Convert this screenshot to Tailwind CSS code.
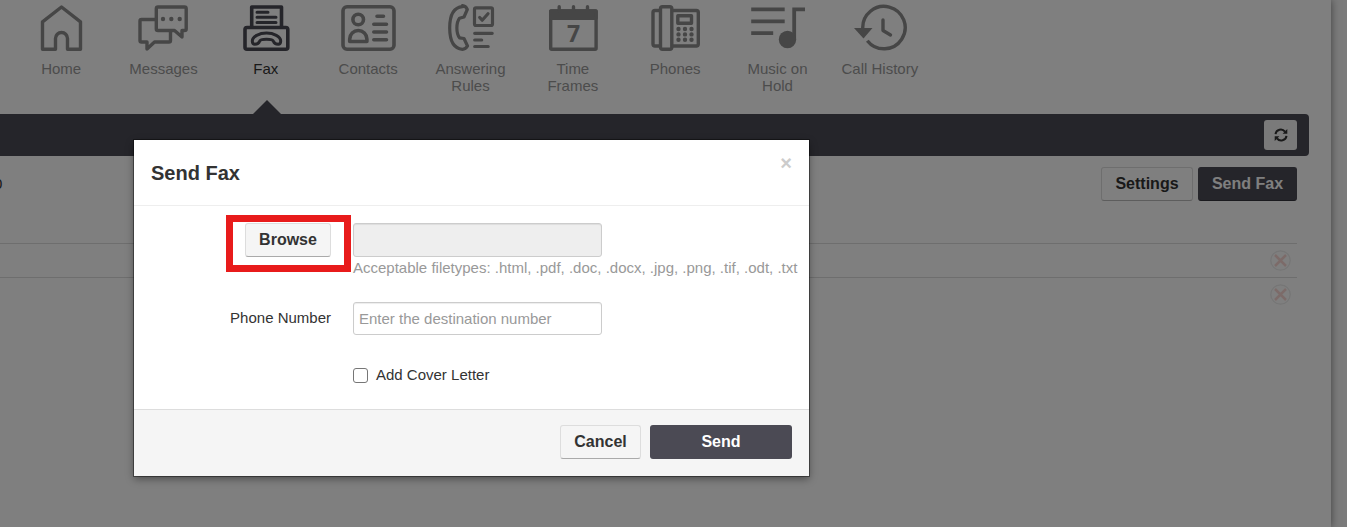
<!DOCTYPE html>
<html lang="en">
<head>
    <meta charset="utf-8">
    <title>Send Fax</title>
    <script src="https://cdn.jsdelivr.net/npm/@tailwindcss/browser@4"></script>
</head>
<body class="relative min-h-screen overflow-hidden bg-[#f6f6f6] font-['Liberation_Sans',Arial,sans-serif] text-[15px] text-[#333]">
<!-- Page behind the dialog -->
<div class="mr-4 min-h-screen bg-white shadow-[0_0_8px_rgba(0,0,0,0.5)]">
    <!-- Main navigation -->
    <nav class="ml-[10px] grid h-[114px] w-[921px] grid-cols-9 pt-1 text-center leading-[17px] text-[#999]">
        <a href="#" class="flex flex-col items-center gap-2">
            <svg class="h-12 w-14" viewBox="33 4 56 48" fill="none" stroke="#8c8c8c" stroke-width="3.4" stroke-linejoin="round">
                <path d="M42.5 49.3V21.8L61.5 7l19 14.8v27.5H67.5V38.5a6 6 0 0 0-12 0v10.8z"/>
            </svg>
            <span>Home</span>
        </a>
        <a href="#" class="flex flex-col items-center gap-2">
            <svg class="h-12 w-14" viewBox="136 4 56 48" fill="none" stroke="#8c8c8c" stroke-width="3.4" stroke-linejoin="round">
                <path d="M159 7h26.5q1.7 0 1.7 1.7V29q0 1.5-1.7 1.5H183V37l-7.5-6.500H159q-1.700 0-1.700-1.500V8.700Q157.300 7 159 7z"/>
                <path d="M157 19.500h-14.500q-1.500 0-1.500 1.500v19.500q0 1.500 1.500 1.500h5.500v7l7.500-7h14.500q1.500 0 1.500-1.500V31"/>
                <g fill="#8c8c8c" stroke="none">
                    <circle cx="164" cy="19" r="2.200"/>
                    <circle cx="172.300" cy="19" r="2.200"/>
                    <circle cx="180.700" cy="19" r="2.200"/>
                </g>
            </svg>
            <span>Messages</span>
        </a>
        <a href="#" class="relative flex flex-col items-center gap-2 text-[#333]">
            <svg class="h-12 w-14" viewBox="238 4 56 48" fill="none" stroke="#4b4a54" stroke-width="3.600" stroke-linejoin="round" stroke-linecap="round">
                <path d="M251.700 27V7h29.800v20"/>
                <rect x="245" y="27.500" width="42.800" height="21.800" rx="2"/>
                <path stroke-width="3" d="M257 12.200h11M257 17.200h19M257 22.500h19"/>
                <path stroke-width="3" d="M252.300 41c0-4.500 7-8 14.200-8s14.200 3.500 14.200 8c0 2-1 3.200-2.500 3.200-2 0-4.200-1.200-4.800-3-.500-1.500-1.500-2-6.900-2s-6.400.500-6.900 2c-.600 1.800-2.800 3-4.800 3-1.500 0-2.500-1.200-2.500-3.200z"/>
            </svg>
            <span>Fax</span>
            <svg class="absolute top-24 h-[14px] w-[30px]" viewBox="0 0 30 14" fill="#4b4a54"><path d="M16 0l14 14H2z"/></svg>
        </a>
        <a href="#" class="flex flex-col items-center gap-2">
            <svg class="h-12 w-14" viewBox="340 4 56 48" fill="none" stroke="#8c8c8c" stroke-width="3.600" stroke-linecap="round" stroke-linejoin="round">
                <rect x="343" y="6.800" width="51" height="42.400" rx="4"/>
                <circle cx="358.200" cy="19.500" r="5.300"/>
                <path d="M349.700 41.500v-2.500a8.600 8.500 0 0 1 17.200 0v2.500z"/>
                <path d="M377 16.300h6.500M373.800 24.200h12.700M373.800 32h12.700M373.800 39.700h12.700"/>
            </svg>
            <span>Contacts</span>
        </a>
        <a href="#" class="flex flex-col items-center gap-2">
            <svg class="h-12 w-14" viewBox="442 4 56 48" fill="none" stroke="#8c8c8c" stroke-width="3.200" stroke-linecap="round" stroke-linejoin="round">
                <path d="M462.500 6.700C453 7.500 449.700 17 449.700 28s3.300 20.500 12.800 21.300c2.500 0 4-1.500 5-3.300l-3.500-7.500-4.500-.700c-3.500-4.500-3.500-15 0-19.500l4.500-1.300 3.300-7.500c-.800-1.800-2.300-3.600-4.800-3.800z"/>
                <rect x="474.500" y="7.800" width="18" height="17.700" rx="1.500"/>
                <path d="M479.700 17.500l2.500 2.700 5.800-6.500"/>
                <path d="M474.700 33.300h17.500M474.700 40h7M474.700 46.500h13.500"/>
            </svg>
            <span>Answering<br>Rules</span>
        </a>
        <a href="#" class="flex flex-col items-center gap-2">
            <svg class="h-12 w-14" viewBox="545 4 56 48" fill="none" stroke="#8c8c8c" stroke-width="3.400" stroke-linecap="round" stroke-linejoin="round">
                <rect x="550.700" y="11" width="45.400" height="38.300" rx="1"/>
                <path fill="#8c8c8c" d="M550.700 11h45.400v7.300h-45.400z"/>
                <path d="M559.200 6.700v4M573.500 6.700v4M587.500 6.700v4"/>
                <text x="573.500" y="42" text-anchor="middle" class="font-['Open_Sans',sans-serif] text-[23px] font-bold" fill="#8c8c8c" stroke="none">7</text>
            </svg>
            <span>Time<br>Frames</span>
        </a>
        <a href="#" class="flex flex-col items-center gap-2">
            <svg class="h-12 w-14" viewBox="647 4 56 48" fill="none" stroke="#8c8c8c" stroke-width="3.400" stroke-linejoin="round">
                <path d="M660.500 10.500h-5.500q-2 0-2 2v31.500q0 2 2 2h5.500"/>
                <rect x="660.500" y="6.700" width="11.300" height="42.600" rx="2"/>
                <path d="M671.800 10.500h24.500q2 0 2 2v31.500q0 2-2 2h-24.500"/>
                <rect x="677.800" y="15.700" width="13.700" height="7.500"/>
                <path stroke-width="4.400" stroke-linecap="round" stroke-dasharray="0 6.500" d="M678.500 29h13.100M678.500 34.400h13.100M678.500 39.700h13.100"/>
            </svg>
            <span>Phones</span>
        </a>
        <a href="#" class="flex flex-col items-center gap-2">
            <svg class="h-12 w-14" viewBox="750 4 56 48" fill="none" stroke="#8c8c8c" stroke-width="3.800">
                <path d="M752.200 9.300h33.500M752.200 21.300h33.500M752.200 33.200h22M795.200 39V9.300h11"/>
                <circle cx="788.500" cy="39.500" r="8.700" fill="#8c8c8c" stroke="none"/>
            </svg>
            <span>Music on<br>Hold</span>
        </a>
        <a href="#" class="flex flex-col items-center gap-2">
            <svg class="h-12 w-14" viewBox="852 4 56 48" fill="none" stroke="#8c8c8c" stroke-width="3.400">
                <path d="M862.800 29A21.200 21.200 0 1 1 867.300 40.700"/>
                <path fill="#8c8c8c" stroke="none" d="M854 28h18.500l-9 10.500z"/>
                <path stroke-linecap="round" stroke-linejoin="round" d="M883 20v10.500l7.500 4.500"/>
            </svg>
            <span>Call History</span>
        </a>
    </nav>

    <!-- Toolbar -->
    <div class="mr-[22px] flex h-[42px] items-center justify-end rounded-r bg-[#4b4a54] pr-3">
        <button type="button" aria-label="Refresh" class="flex h-[30px] w-[33px] items-center justify-center rounded-[3px] bg-[#f5f5f5]">
            <svg class="size-[14px]" viewBox="0 0 14 14" fill="none" stroke="#333" stroke-width="2">
                <path d="M1.500 6.200a5.300 5.300 0 0 1 9.500-2.500M12.500 7.800a5.300 5.300 0 0 1-9.500 2.500"/>
                <path fill="#333" stroke="none" d="M13.300 1v4.700H8.600zM.700 13V8.300h4.700z"/>
            </svg>
        </button>
    </div>

    <!-- Fax list -->
    <main class="mr-[34px]">
        <div class="flex h-[87px] items-start justify-between pt-[11px]">
            <span class="-ml-[6px] leading-[34px]">0</span>
            <div class="flex gap-[5px] text-base font-bold">
                <button type="button" class="h-[34px] w-[92px] rounded-[3px] border border-[#ddd] border-b-[#bbb]">Settings</button>
                <button type="button" class="h-[34px] w-[99px] rounded-[3px] border border-[#4b4a54] border-b-[#35343c] bg-[#4b4a54] text-white">Send Fax</button>
            </div>
        </div>
        <div class="flex h-[34px] items-center justify-end border-t border-[#ddd] pr-[6px]">
            <button type="button" aria-label="Delete fax">
                <svg class="size-[21px]" viewBox="0 0 21 21" fill="none">
                    <circle cx="10.500" cy="10.500" r="9.700" stroke="#ececec" stroke-width="1.300"/>
                    <path stroke="#f8d6d2" stroke-width="2.500" d="M5 5l11 11M16 5L5 16"/>
                </svg>
            </button>
        </div>
        <div class="flex h-[34px] items-center justify-end border-t border-[#ddd] pr-[6px]">
            <button type="button" aria-label="Delete fax">
                <svg class="size-[21px]" viewBox="0 0 21 21" fill="none">
                    <circle cx="10.500" cy="10.500" r="9.700" stroke="#ececec" stroke-width="1.300"/>
                    <path stroke="#f8d6d2" stroke-width="2.500" d="M5 5l11 11M16 5L5 16"/>
                </svg>
            </button>
        </div>
    </main>
</div>

<!-- Backdrop -->
<div class="absolute inset-0 bg-black/50"></div>

<!-- Send fax dialog -->
<form role="dialog" aria-labelledby="dialogTitle" class="absolute top-[140px] left-[134px] w-[675px] bg-white shadow-[0_0_0_1px_rgba(0,0,0,0.4),0_3px_8px_rgba(0,0,0,0.4)]">
    <div class="flex h-[66px] items-center justify-between border-b border-[#eee] px-[17px]">
        <h3 id="dialogTitle" class="text-xl font-bold">Send Fax</h3>
        <button type="button" aria-label="Close" class="mb-5 text-xl leading-5 font-bold text-[#ccc]">&times;</button>
    </div>
    <div class="grid grid-cols-[197px_1fr] gap-x-[22px] pt-[17px] pb-6">
        <div class="text-right">
            <div class="relative inline-block">
                <button type="button" class="h-[34px] w-[86px] rounded-[3px] border border-[#ddd] border-b-[#aaa] bg-[#f5f5f5] text-base font-bold">Browse</button>
                <!-- highlight around the button -->
                <div class="pointer-events-none absolute -top-2 -right-5 -bottom-[15px] -left-[19px] border-[7px] border-[#e81b1b]"></div>
            </div>
        </div>
        <div class="mb-6">
            <input type="text" aria-label="Selected file" readonly class="block h-[34px] w-[249px] rounded-[3px] border border-[#ccc] bg-[#eee] px-[5px] shadow-[inset_0_1px_1px_rgba(0,0,0,0.075)]">
            <p class="leading-[21px] whitespace-nowrap text-[#999]">Acceptable filetypes: .html, .pdf, .doc, .docx, .jpg, .png, .tif, .odt, .txt</p>
        </div>
        <label for="phone" class="text-right leading-8">Phone Number</label>
        <input id="phone" type="text" placeholder="Enter the destination number" class="mb-[30px] h-[33px] w-[249px] rounded-[3px] border border-[#ccc] bg-white px-[5px] shadow-[inset_0_1px_1px_rgba(0,0,0,0.075)] placeholder:text-[#999]">
        <label class="col-start-2 flex items-center gap-2 leading-5">
            <input type="checkbox" class="size-[15px] appearance-none rounded-[3px] border border-[#767676] bg-white">
            Add Cover Letter
        </label>
    </div>
    <div class="flex justify-end gap-[9px] border-t border-[#ddd] bg-[#f5f5f5] px-[17px] pt-[15px] pb-[17px] text-base font-bold">
        <button type="button" class="h-[34px] w-[81px] rounded-[3px] border border-[#ddd] border-b-[#aaa] bg-[#f5f5f5]">Cancel</button>
        <button type="submit" class="h-[34px] w-[142px] rounded-[3px] bg-[#4b4a54] text-white">Send</button>
    </div>
</form>
</body>
</html>
